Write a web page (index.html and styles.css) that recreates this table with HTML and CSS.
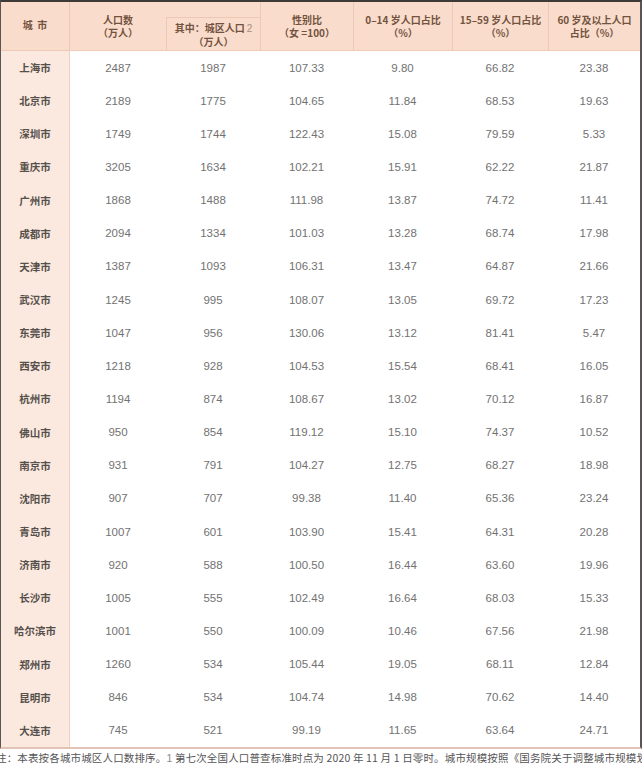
FILE: index.html
```html
<!DOCTYPE html>
<html lang="zh-CN">
<head>
<meta charset="utf-8">
<title>城市人口</title>
<link rel="stylesheet" href="styles.css">
</head>
<body>
<div class="sheet">
  <div class="table">
    <div class="row head">
      <div class="hc city-h"><span class="ln">城&nbsp;&nbsp;市</span></div>
      <div class="hc"><span class="ln">人口数</span><span class="ln">（万人）</span></div>
      <div class="hc sub-wrap"><div class="sub"><span class="ln">其中：城区人口<span class="fn">2</span></span><span class="ln">（万人）</span></div></div>
      <div class="hc line"><span class="ln">性别比</span><span class="ln">（女 =100）</span></div>
      <div class="hc line"><span class="ln">0–14 岁人口占比</span><span class="ln">（%）</span></div>
      <div class="hc line"><span class="ln">15–59 岁人口占比</span><span class="ln">（%）</span></div>
      <div class="hc line"><span class="ln">60 岁及以上人口</span><span class="ln">占比（%）</span></div>
    </div>
    <div class="row"><div class="c city">上海市</div><div class="c">2487</div><div class="c">1987</div><div class="c">107.33</div><div class="c">9.80</div><div class="c">66.82</div><div class="c">23.38</div></div>
    <div class="row"><div class="c city">北京市</div><div class="c">2189</div><div class="c">1775</div><div class="c">104.65</div><div class="c">11.84</div><div class="c">68.53</div><div class="c">19.63</div></div>
    <div class="row"><div class="c city">深圳市</div><div class="c">1749</div><div class="c">1744</div><div class="c">122.43</div><div class="c">15.08</div><div class="c">79.59</div><div class="c">5.33</div></div>
    <div class="row"><div class="c city">重庆市</div><div class="c">3205</div><div class="c">1634</div><div class="c">102.21</div><div class="c">15.91</div><div class="c">62.22</div><div class="c">21.87</div></div>
    <div class="row"><div class="c city">广州市</div><div class="c">1868</div><div class="c">1488</div><div class="c">111.98</div><div class="c">13.87</div><div class="c">74.72</div><div class="c">11.41</div></div>
    <div class="row"><div class="c city">成都市</div><div class="c">2094</div><div class="c">1334</div><div class="c">101.03</div><div class="c">13.28</div><div class="c">68.74</div><div class="c">17.98</div></div>
    <div class="row"><div class="c city">天津市</div><div class="c">1387</div><div class="c">1093</div><div class="c">106.31</div><div class="c">13.47</div><div class="c">64.87</div><div class="c">21.66</div></div>
    <div class="row"><div class="c city">武汉市</div><div class="c">1245</div><div class="c">995</div><div class="c">108.07</div><div class="c">13.05</div><div class="c">69.72</div><div class="c">17.23</div></div>
    <div class="row"><div class="c city">东莞市</div><div class="c">1047</div><div class="c">956</div><div class="c">130.06</div><div class="c">13.12</div><div class="c">81.41</div><div class="c">5.47</div></div>
    <div class="row"><div class="c city">西安市</div><div class="c">1218</div><div class="c">928</div><div class="c">104.53</div><div class="c">15.54</div><div class="c">68.41</div><div class="c">16.05</div></div>
    <div class="row"><div class="c city">杭州市</div><div class="c">1194</div><div class="c">874</div><div class="c">108.67</div><div class="c">13.02</div><div class="c">70.12</div><div class="c">16.87</div></div>
    <div class="row"><div class="c city">佛山市</div><div class="c">950</div><div class="c">854</div><div class="c">119.12</div><div class="c">15.10</div><div class="c">74.37</div><div class="c">10.52</div></div>
    <div class="row"><div class="c city">南京市</div><div class="c">931</div><div class="c">791</div><div class="c">104.27</div><div class="c">12.75</div><div class="c">68.27</div><div class="c">18.98</div></div>
    <div class="row"><div class="c city">沈阳市</div><div class="c">907</div><div class="c">707</div><div class="c">99.38</div><div class="c">11.40</div><div class="c">65.36</div><div class="c">23.24</div></div>
    <div class="row"><div class="c city">青岛市</div><div class="c">1007</div><div class="c">601</div><div class="c">103.90</div><div class="c">15.41</div><div class="c">64.31</div><div class="c">20.28</div></div>
    <div class="row"><div class="c city">济南市</div><div class="c">920</div><div class="c">588</div><div class="c">100.50</div><div class="c">16.44</div><div class="c">63.60</div><div class="c">19.96</div></div>
    <div class="row"><div class="c city">长沙市</div><div class="c">1005</div><div class="c">555</div><div class="c">102.49</div><div class="c">16.64</div><div class="c">68.03</div><div class="c">15.33</div></div>
    <div class="row"><div class="c city">哈尔滨市</div><div class="c">1001</div><div class="c">550</div><div class="c">100.09</div><div class="c">10.46</div><div class="c">67.56</div><div class="c">21.98</div></div>
    <div class="row"><div class="c city">郑州市</div><div class="c">1260</div><div class="c">534</div><div class="c">105.44</div><div class="c">19.05</div><div class="c">68.11</div><div class="c">12.84</div></div>
    <div class="row"><div class="c city">昆明市</div><div class="c">846</div><div class="c">534</div><div class="c">104.74</div><div class="c">14.98</div><div class="c">70.62</div><div class="c">14.40</div></div>
    <div class="row"><div class="c city">大连市</div><div class="c">745</div><div class="c">521</div><div class="c">99.19</div><div class="c">11.65</div><div class="c">63.64</div><div class="c">24.71</div></div>
  </div>
  <p class="note">注：本表按各城市城区人口数排序。<span class="fn">1</span> 第七次全国人口普查标准时点为 2020 年 11 月 1 日零时。城市规模按照《国务院关于调整城市规模划分标准的通知》</p>
</div>
</body>
</html>
```
FILE: styles.css
```css
* { box-sizing: border-box; }
html, body {
  margin: 0;
  padding: 0;
  background: #ffffff;
}
body {
  width: 642px;
  height: 765px;
  overflow: hidden;
  font-family: "Liberation Sans", "Noto Sans CJK SC", sans-serif;
}
.sheet {
  width: 642px;
}
.table {
  border-top: 2px solid #3e3a38;
  border-left: 1px solid #5a5552;
  border-right: 2px solid #5a5552;
  border-bottom: 2px solid #e2c3b5;
}
.row {
  display: grid;
  grid-template-columns: 69px 96px 94px 93px 99px 96px 92px;
  height: 33.15px;
}
.head {
  height: 49px;
  background: #f9dccb;
  border-bottom: 1px solid #efc9b6;
}
.hc {
  display: flex;
  flex-direction: column;
  align-items: center;
  justify-content: center;
  text-align: center;
  font-family: "Noto Sans CJK SC", sans-serif;
  font-weight: 700;
  font-size: 10px;
  color: #73533f;
  white-space: nowrap;
}
.ln {
  display: block;
  line-height: 13.5px;
}
.hc.city-h {
  border-right: 1px solid #ecc8b6;
  padding-bottom: 3px;
}
.hc.line {
  border-left: 1px solid #ecc8b6;
}
.sub-wrap {
  align-items: stretch;
  justify-content: stretch;
  padding-top: 15px;
}
.sub {
  flex: 1;
  border-top: 1px solid #ecc8b6;
  border-left: 1px solid #ecc8b6;
  display: flex;
  flex-direction: column;
  align-items: center;
  justify-content: center;
  padding-top: 1px;
}
.fn {
  font-family: "Liberation Sans", sans-serif;
  font-weight: 400;
  color: #a88e80;
  margin-left: 2px;
}
.c {
  display: flex;
  align-items: center;
  justify-content: center;
  font-size: 11.5px;
  color: #727272;
}
.c.city {
  background: #fbe8de;
  border-right: 1px solid #efd0c0;
  font-family: "Noto Sans CJK SC", sans-serif;
  font-weight: 700;
  font-size: 10.5px;
  color: #56504c;
}
.note {
  margin: 2px 0 0 -4px;
  white-space: nowrap;
  overflow: hidden;
  font-family: "Noto Sans CJK SC", sans-serif;
  font-size: 10.5px;
  letter-spacing: 0.15px;
  line-height: 14px;
  color: #555555;
}
.note .fn {
  color: #8a8a8a;
  margin-left: 0;
}
```
